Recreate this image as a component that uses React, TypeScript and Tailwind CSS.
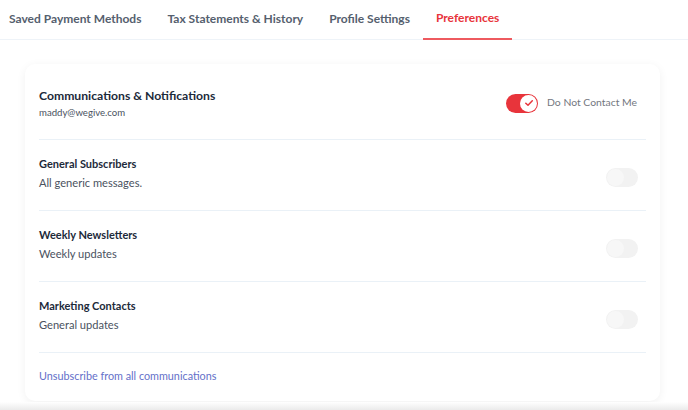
import React from "react";

const font = { fontFamily: "Lato, 'Open Sans', sans-serif" };

function RedToggle() {
  return (
    <div className="relative w-[32px] h-[19px] rounded-full bg-[#e8343b] shrink-0">
      <div className="absolute right-[1px] top-[1px] w-[17px] h-[17px] rounded-full bg-white flex items-center justify-center">
        <svg width="10" height="10" viewBox="0 0 10 10" fill="none">
          <path d="M1.8 5.2 L4 7.3 L8.3 2.8" stroke="#e8343b" strokeWidth="1.5" strokeLinecap="round" strokeLinejoin="round" />
        </svg>
      </div>
    </div>
  );
}

function GrayToggle() {
  return (
    <div className="relative w-[32px] h-[19px] rounded-full bg-[#f2f2f2] shrink-0">
      <div className="absolute left-[1px] top-[1px] w-[17px] h-[17px] rounded-full bg-[#f7f7f7]" />
    </div>
  );
}

const rows = [
  { title: "General Subscribers", desc: "All generic messages." },
  { title: "Weekly Newsletters", desc: "Weekly updates" },
  { title: "Marketing Contacts", desc: "General updates" },
];

export default function App() {
  const tabs = ["Saved Payment Methods", "Tax Statements & History", "Profile Settings", "Preferences"];
  return (
    <div className="w-[688px] h-[410px] bg-white overflow-hidden flex flex-col" style={font}>
      <div className="flex h-[40px] border-b border-[#eef3f8] shrink-0">
        <div className="flex -ml-[4px]">
          {tabs.map((t) => {
            const active = t === "Preferences";
            return (
              <div
                key={t}
                className={
                  active
                    ? "h-[40px] px-[13px] flex items-center text-[12px] font-bold text-[#e8343b] border-b-2 border-[#ee5a5f]"
                    : "h-[40px] px-[13px] flex items-center text-[12px] font-bold text-[#55606e]"
                }
              >
                <span className="-mt-[2px]">{t}</span>
              </div>
            );
          })}
        </div>
      </div>
      <div className="flex-1 px-[25px] pt-[24px]">
        <div className="w-[635px] h-[337px] bg-white rounded-[10px] shadow-[0_2px_10px_rgba(0,0,0,0.06)] px-[14px] flex flex-col">
          <div className="h-[76px] shrink-0 flex items-center justify-between border-b border-[#eaf1f7] pr-[9px] pt-[4px]">
            <div className="flex flex-col">
              <div className="text-[12.2px] font-bold text-[#1c2a3a] leading-[18px]">Communications &amp; Notifications</div>
              <div className="text-[9.6px] text-[#4a5260] leading-[14px] mt-[1px]">maddy@wegive.com</div>
            </div>
            <div className="flex items-center gap-[9px] -mt-[1px]">
              <RedToggle />
              <span className="text-[10.4px] text-[#737780]">Do Not Contact Me</span>
            </div>
          </div>
          {rows.map((r) => (
            <div key={r.title} className="h-[71px] shrink-0 flex items-center justify-between border-b border-[#eaf1f7] pr-[8px]">
              <div className="flex flex-col -mt-[4px]">
                <div className="text-[11px] font-bold text-[#1c2a3a] leading-[16px]">{r.title}</div>
                <div className="text-[11.1px] text-[#4a5260] leading-[16px] mt-[3px]">{r.desc}</div>
              </div>
              <div className="mt-[4px]">
                <GrayToggle />
              </div>
            </div>
          ))}
          <div className="h-[47px] flex items-center">
            <span className="text-[10.8px] text-[#6470c9]">Unsubscribe from all communications</span>
          </div>
        </div>
      </div>
      <div className="h-[8px] shrink-0 bg-gradient-to-b from-white to-[#ebebeb]" />
    </div>
  );
}
